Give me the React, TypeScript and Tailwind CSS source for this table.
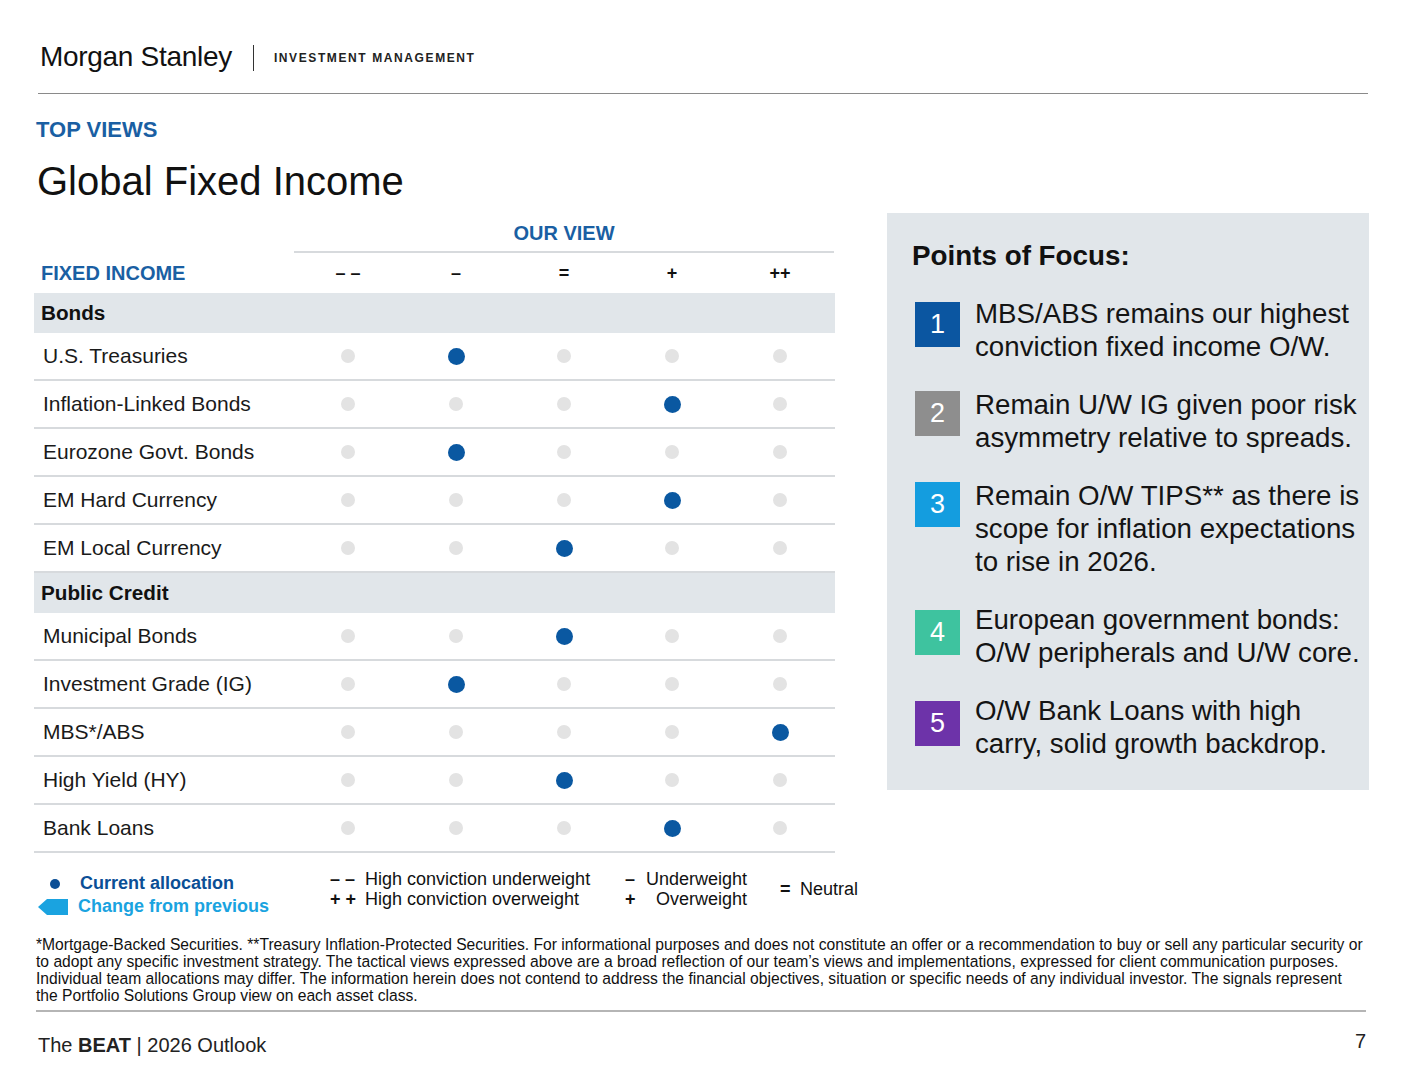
import React from "react";

type Row = { label: string; pos: number };

const bonds: Row[] = [
  { label: "U.S. Treasuries", pos: 1 },
  { label: "Inflation-Linked Bonds", pos: 3 },
  { label: "Eurozone Govt. Bonds", pos: 1 },
  { label: "EM Hard Currency", pos: 3 },
  { label: "EM Local Currency", pos: 2 },
];

const credit: Row[] = [
  { label: "Municipal Bonds", pos: 2 },
  { label: "Investment Grade (IG)", pos: 1 },
  { label: "MBS*/ABS", pos: 4 },
  { label: "High Yield (HY)", pos: 2 },
  { label: "Bank Loans", pos: 3 },
];

const headers = ["– –", "–", "=", "+", "++"];

function DataRow({ row }: { row: Row }) {
  return (
    <div className="flex h-[48px] border-b-2 border-[#d7dadd]">
      <div className="w-[260px] pl-[9px] flex items-center text-[21px] text-[#1a1a1a]">{row.label}</div>
      {[0, 1, 2, 3, 4].map((i) => (
        <div key={i} className="w-[108px] flex items-center justify-center">
          {i === row.pos ? (
            <div className="w-[17px] h-[17px] rounded-full bg-[#0a58a1]" />
          ) : (
            <div className="w-[14px] h-[14px] rounded-full bg-[#e3e3e3]" />
          )}
        </div>
      ))}
    </div>
  );
}

function Section({ title }: { title: string }) {
  return (
    <div className="h-[40px] bg-[#e1e6ea] flex items-center pl-[7px] text-[20.7px] font-bold text-[#111]">{title}</div>
  );
}

const points = [
  { n: "1", color: "bg-[#0b56a1]", off: "mt-[5px]", lines: ["MBS/ABS remains our highest", "conviction fixed income O/W."] },
  { n: "2", color: "bg-[#8e8e8e]", off: "mt-[3px]", lines: ["Remain U/W IG given poor risk", "asymmetry relative to spreads."] },
  { n: "3", color: "bg-[#149ddf]", off: "mt-[3px]", lines: ["Remain O/W TIPS** as there is", "scope for inflation expectations", "to rise in 2026."] },
  { n: "4", color: "bg-[#3ec39f]", off: "mt-[7px]", lines: ["European government bonds:", "O/W peripherals and U/W core."] },
  { n: "5", color: "bg-[#6d33a9]", off: "mt-[7px]", lines: ["O/W Bank Loans with high", "carry, solid growth backdrop."] },
];

export default function App() {
  return (
    <div className="w-[1412px] h-[1080px] bg-white font-['Liberation_Sans',Arial,sans-serif] text-[#111] overflow-hidden">
      {/* Header */}
      <div className="flex items-center h-[36px] mt-[39px] ml-[40px]">
        <span className="text-[28px] leading-[36px] text-[#111] tracking-[-0.3px]">Morgan Stanley</span>
        <div className="w-px h-[26px] bg-[#333] ml-[21px] mt-[2px]" />
        <span className="ml-[20px] mt-[2px] text-[12px] font-bold tracking-[1.6px] text-[#222]">INVESTMENT MANAGEMENT</span>
      </div>
      <div className="ml-[38px] w-[1330px] h-px bg-[#8a8a8a] mt-[18px]" />

      <div className="ml-[36px] mt-[23px] text-[22px] leading-[26px] font-bold text-[#1a5fa3]">TOP VIEWS</div>
      <div className="ml-[37px] mt-[14px] text-[40px] leading-[48px] text-[#111]">Global Fixed Income</div>

      <div className="flex mt-[8px]">
        {/* Table */}
        <div className="ml-[34px] w-[801px] pt-[1px]">
          <div className="flex h-[39px]">
            <div className="w-[260px]" />
            <div className="w-[540px] flex items-center justify-center text-[20px] font-bold text-[#1a5fa3] border-b-2 border-[#d7dadd]">
              OUR VIEW
            </div>
          </div>
          <div className="flex h-[40px] items-center">
            <div className="w-[260px] pl-[7px] text-[20px] font-bold text-[#1a5fa3]">FIXED INCOME</div>
            {headers.map((h) => (
              <div key={h} className="w-[108px] text-center text-[18px] font-bold text-[#111]">{h}</div>
            ))}
          </div>
          <Section title="Bonds" />
          {bonds.map((r) => (
            <DataRow key={r.label} row={r} />
          ))}
          <Section title="Public Credit" />
          {credit.map((r) => (
            <DataRow key={r.label} row={r} />
          ))}
        </div>

        {/* Points of focus */}
        <div className="ml-[52px] w-[482px] h-[577px] bg-[#e1e6ea] pt-[26px]">
          <div className="pl-[25px] text-[27.8px] leading-[34px] font-bold text-[#111]">Points of Focus:</div>
          <div className="flex flex-col gap-[25px] mt-[24px] pl-[28px]">
            {points.map((p) => (
              <div key={p.n} className="flex items-start">
                <div className={`w-[45px] h-[45px] shrink-0 ${p.color} ${p.off} flex items-center justify-center text-white text-[27px]`}>
                  {p.n}
                </div>
                <div className="ml-[15px] text-[27.7px] leading-[33px] text-[#141414] whitespace-nowrap">
                  {p.lines.map((l, i) => (
                    <div key={i}>{l}</div>
                  ))}
                </div>
              </div>
            ))}
          </div>
        </div>
      </div>

      {/* Legend */}
      <div className="flex items-start mt-[15px] ml-[38px] h-[48px]">
        <div className="w-[292px] flex flex-col mt-[4px]">
          <div className="flex items-center h-[23px]">
            <div className="w-[30px] flex justify-center pl-[4px]">
              <div className="w-[10px] h-[10px] rounded-full bg-[#0b4f96]" />
            </div>
            <span className="ml-[12px] text-[18px] font-bold text-[#0b4f96]">Current allocation</span>
          </div>
          <div className="flex items-center h-[23px]">
            <svg width="30" height="16" viewBox="0 0 30 16">
              <polygon points="0,8 9,0 30,0 30,16 9,16" fill="#1aa3e0" />
            </svg>
            <span className="ml-[10px] text-[18px] font-bold text-[#1aa3e0]">Change from previous</span>
          </div>
        </div>
        <div className="w-[295px] flex flex-col text-[18px] text-[#111] mt-[1px]">
          <div className="flex h-[20px] items-center">
            <span className="w-[35px] font-bold">– –</span>
            <span>High conviction underweight</span>
          </div>
          <div className="flex h-[20px] items-center">
            <span className="w-[35px] font-bold">+ +</span>
            <span>High conviction overweight</span>
          </div>
        </div>
        <div className="w-[155px] flex flex-col text-[18px] text-[#111] mt-[1px]">
          <div className="flex h-[20px] items-center">
            <span className="w-[20px] font-bold">–</span>
            <span className="w-[102px] text-right">Underweight</span>
          </div>
          <div className="flex h-[20px] items-center">
            <span className="w-[20px] font-bold">+</span>
            <span className="w-[102px] text-right">Overweight</span>
          </div>
        </div>
        <div className="flex items-center h-[20px] mt-[11px] text-[18px] text-[#111]">
          <span className="w-[20px] font-bold">=</span>
          <span>Neutral</span>
        </div>
      </div>

      {/* Footnote */}
      <div className="ml-[36px] mt-[20px] w-[1340px] text-[15.65px] leading-[17px] text-[#111] whitespace-nowrap">
        <div>*Mortgage-Backed Securities. **Treasury Inflation-Protected Securities. For informational purposes and does not constitute an offer or a recommendation to buy or sell any particular security or</div>
        <div>to adopt any specific investment strategy. The tactical views expressed above are a broad reflection of our team’s views and implementations, expressed for client communication purposes.</div>
        <div>Individual team allocations may differ. The information herein does not contend to address the financial objectives, situation or specific needs of any individual investor. The signals represent</div>
        <div>the Portfolio Solutions Group view on each asset class.</div>
      </div>
      <div className="ml-[36px] w-[1330px] h-[2px] bg-[#b5b5b5] mt-[6px]" />

      {/* Footer */}
      <div className="flex justify-between ml-[38px] w-[1328px] mt-[20px] text-[#222]">
        <div className="text-[20px] leading-[26px]">
          The <span className="font-bold">BEAT</span> | 2026 Outlook
        </div>
        <div className="text-[20px] leading-[24px] -mt-[3px]">7</div>
      </div>
    </div>
  );
}
